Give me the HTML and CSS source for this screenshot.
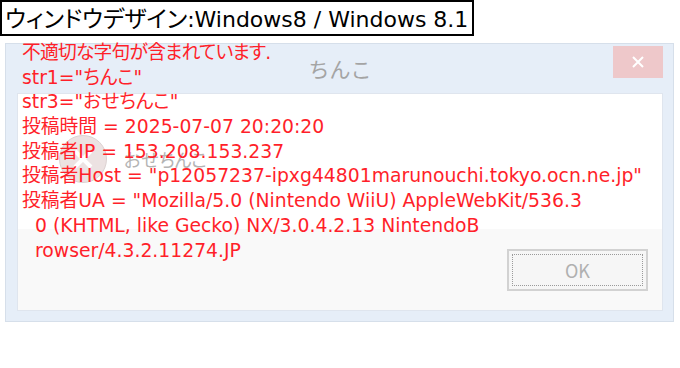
FILE: index.html
```html
<!DOCTYPE html>
<html lang="ja">
  <head>
    <meta charset="UTF-8" />
    <meta name="viewport" content="width=device-width, initial-scale=1.0" />
    <title>ウィンドウデザイン</title>
    <link rel="stylesheet" href="styles.css">
  </head>
  <body>
    <h3 class="caption"><span class="kana">ウィンドウデザイン</span>:Windows8 / Windows 8.1</h3>

    <div class="window">
      <div class="titlebar">
        <span class="title">ちんこ</span>
        <button class="close" type="button">
          <svg width="12" height="12" viewBox="0 0 12 12">
            <path d="M1 1 L11 11 M11 1 L1 11" stroke="#fff" stroke-width="2" />
          </svg>
        </button>
      </div>
      <div class="client">
        <div class="message">
          <span class="error-icon">
            <svg width="50" height="50" viewBox="0 0 50 50">
              <circle cx="25" cy="25" r="23.5" fill="#ece2e2" stroke="#dcd2d2" />
              <path d="M17 17 L33 33 M33 17 L17 33" stroke="#fff" stroke-width="4" />
            </svg>
          </span>
          <span class="message-text">おせちんこ</span>
        </div>
        <div class="buttons">
          <button class="ok" type="button"><span>OK</span></button>
        </div>
      </div>

      <!-- overlay: the warning printed on top of the dialog -->
      <div class="alert">
        <div class="head">不適切な字句が含まれています.</div>
        <div>str1="ちんこ"</div>
        <div>str3="おせちんこ"</div>
        <div>投稿時間 = 2025-07-07 20:20:20</div>
        <div>投稿者IP = 153.208.153.237</div>
        <div>投稿者Host = "p12057237-ipxg44801marunouchi.tokyo.ocn.ne.jp"</div>
        <div>投稿者UA = "Mozilla/5.0 (Nintendo WiiU) AppleWebKit/536.3</div>
        <div class="cont">0 (KHTML, like Gecko) NX/3.0.4.2.13 NintendoB</div>
        <div class="cont">rowser/4.3.2.11274.JP</div>
      </div>
    </div>
  </body>
</html>
```

FILE: styles.css
```css
body {
  margin: 0;
  font-family: "DejaVu Sans", "Noto Sans CJK JP", sans-serif;
  background: #fff;
}

.caption {
  display: inline-block;
  margin: 0;
  height: 36px;
  box-sizing: border-box;
  padding: 0 4px 0 3px;
  border: 2px solid #000;
  font-size: 22px;
  font-weight: normal;
  line-height: 30px;
  color: #000;
}

.caption .kana {
  font-family: "Noto Sans CJK JP", sans-serif;
  font-size: 23px;
  font-feature-settings: "palt";
}

/* dialog frame */
.window {
  position: relative;
  width: 669px;
  height: 279px;
  box-sizing: border-box;
  margin: 7px 0 0 5px;
  padding: 0 10px 10px 11px;
  border: 1px solid #d6dfea;
  background: #e6eef8;
  display: flex;
  flex-direction: column;
}

.titlebar {
  height: 49px;
  display: flex;
  justify-content: center;
  position: relative;
}

.title {
  margin-top: 9px;
  font-family: "Noto Sans CJK JP", sans-serif;
  font-size: 21px;
  line-height: 30px;
  color: #a4a4a4;
}

.close {
  position: absolute;
  right: 0;
  top: 2px;
  width: 50px;
  height: 32px;
  border: none;
  padding: 0;
  background: #eec8ca;
  display: flex;
  align-items: center;
  justify-content: center;
}

.client {
  flex: 1;
  display: flex;
  flex-direction: column;
  border: 1px solid #dfe5ee;
  background: #fff;
}

.message {
  height: 135px;
  display: flex;
  align-items: center;
  padding: 0 0 6px 40px;
  box-sizing: border-box;
  gap: 16px;
}

.error-icon {
  display: flex;
}

.message-text {
  font-family: "Noto Sans CJK JP", sans-serif;
  font-size: 18px;
  font-feature-settings: "palt";
  color: #b4b4b4;
}

.buttons {
  flex: 1;
  background: #f9f9f9;
  display: flex;
  justify-content: flex-end;
  align-items: flex-start;
  padding: 20px 14px 0 0;
}

.ok {
  width: 141px;
  height: 42px;
  padding: 3px;
  border: 2px solid #d2d2d2;
  background: #f6f6f6;
  font-family: inherit;
}

.ok span {
  display: block;
  height: 100%;
  box-sizing: border-box;
  border: 1px dotted #9a9a9a;
  font-family: "Noto Sans CJK JP", sans-serif;
  font-size: 18px;
  line-height: 30px;
  color: #b0b0b0;
}

/* red warning text on top */
.alert {
  position: absolute;
  left: 16px;
  top: -3px;
  font-size: 18.8px;
  line-height: 24.7px;
  font-feature-settings: "palt";
  color: #ff1f2a;
  white-space: nowrap;
}

.alert div {
  height: 24.7px;
}

.alert .head {
  letter-spacing: -0.8px;
}

.alert .cont {
  padding-left: 13px;
}
```
